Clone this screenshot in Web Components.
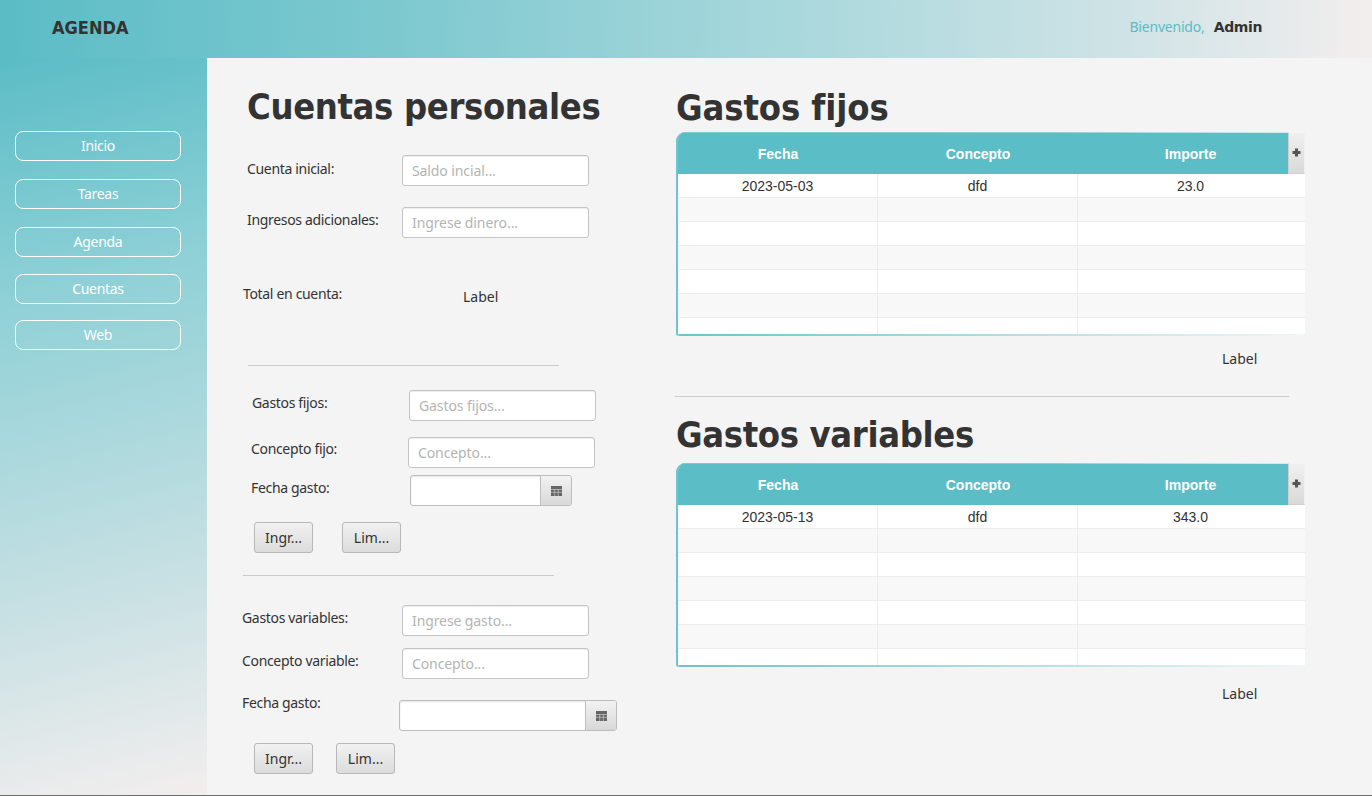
<!DOCTYPE html>
<html lang="es">
<head>
<meta charset="utf-8">
<title>Agenda</title>
<style>
  html, body { margin: 0; height: 100%; }
  body { width: 1372px; height: 796px; overflow: hidden; background: #f4f4f4; font-family: "Noto Sans", sans-serif; color: #333; }
  .left { flex: none; width: 414px; padding-left: 35px; }
  .right { flex: none; padding-left: 20px; }
</style>
</head>
<body>
<agenda-app>
  <top-bar slot="top"></top-bar>
  <side-nav slot="side">
    <nav-button style="margin-top:73px">Inicio</nav-button>
    <nav-button style="margin-top:18px">Tareas</nav-button>
    <nav-button style="margin-top:18px">Agenda</nav-button>
    <nav-button style="margin-top:17px">Cuentas</nav-button>
    <nav-button style="margin-top:16px">Web</nav-button>
  </side-nav>
  <div class="left" slot="main">
    <big-title style="--x:5px;--top:27px">Cuentas personales</big-title>
    <form-row style="--x:5px;--top:26px;--label:155px;--label-shift:-2px"><span slot="label">Cuenta inicial:</span><text-box hint="Saldo incial..."></text-box></form-row>
    <form-row style="--x:5px;--top:21px;--label:155px;--label-shift:-3px"><span slot="label">Ingresos adicionales:</span><text-box hint="Ingrese dinero..."></text-box></form-row>
    <form-row style="--x:1px;--top:47px;--label:220px;--label-shift:-4px;--h:24px"><span slot="label">Total en cuenta:</span><plain-label style="--x:0px;--top:0px">Label</plain-label></form-row>
    <thin-rule style="--x:6px;--top:56px;--w:311px"></thin-rule>
    <form-row style="--x:10px;--top:24px;--label:157px;--label-shift:-3px"><span slot="label">Gastos fijos:</span><text-box hint="Gastos fijos..."></text-box></form-row>
    <form-row style="--x:9px;--top:16px;--label:157px;--label-shift:-4px"><span slot="label">Concepto fijo:</span><text-box hint="Concepto..."></text-box></form-row>
    <form-row style="--x:9px;--top:7px;--label:159px;--label-shift:-3px"><span slot="label">Fecha gasto:</span><date-box style="--w:162px"></date-box></form-row>
    <button-row style="--x:12px;--top:16px;--gap:29px"><push-button>Ingr...</push-button><push-button>Lim...</push-button></button-row>
    <thin-rule style="--x:1px;--top:22px;--w:311px"></thin-rule>
    <form-row style="--x:0px;--top:29px;--label:160px;--label-shift:-3px"><span slot="label">Gastos variables:</span><text-box hint="Ingrese gasto..."></text-box></form-row>
    <form-row style="--x:0px;--top:12px;--label:160px;--label-shift:-3px"><span slot="label">Concepto variable:</span><text-box hint="Concepto..."></text-box></form-row>
    <form-row style="--x:0px;--top:21px;--label:157px;--label-shift:-13px"><span slot="label">Fecha gasto:</span><date-box style="--w:218px"></date-box></form-row>
    <button-row style="--x:12px;--top:12px;--gap:23px"><push-button>Ingr...</push-button><push-button>Lim...</push-button></button-row>
  </div>
  <div class="right" slot="main">
    <big-title style="--top:28px;--track:-.1px">Gastos fijos</big-title>
    <data-table style="--top:2px" fecha="2023-05-03" concepto="dfd" importe="23.0"></data-table>
    <plain-label style="--x:546px;--top:11px">Label</plain-label>
    <thin-rule style="--x:-1px;--top:25px;--w:614px"></thin-rule>
    <big-title style="--top:16px">Gastos variables</big-title>
    <data-table style="--top:6px" fecha="2023-05-13" concepto="dfd" importe="343.0"></data-table>
    <plain-label style="--x:546px;--top:15px">Label</plain-label>
  </div>
</agenda-app>

<script>
function tpl(html) {
  let t = document.createElement("template");
  t.innerHTML = html;
  return t;
}

class Base extends HTMLElement {
  connectedCallback() {
    if (this.shadowRoot) return;
    this.attachShadow({ mode: "open" });
    this.shadowRoot.appendChild(this.constructor.template.content.cloneNode(true));
    if (this.ready) this.ready();
  }
}

class AgendaApp extends Base {
  static template = tpl(`
    <style>
      :host { display: grid; grid-template: 58px 738px / 207px 1165px; width: 1372px; height: 796px; position: relative; }
      .top { grid-column: 1 / 3; }
      .main { display: flex; background: #f4f4f4; }
      .edge { position: absolute; left: 0; right: 0; bottom: 0; height: 1px; background: #6d6d6d; }
    </style>
    <div class="top"><slot name="top"></slot></div>
    <div class="side"><slot name="side"></slot></div>
    <div class="main"><slot name="main"></slot></div>
    <div class="edge"></div>
  `);
}

class TopBar extends Base {
  static template = tpl(`
    <style>
      :host { display: flex; align-items: center; justify-content: space-between; height: 58px; box-sizing: border-box; padding: 0 110px 3px 52px;
        background: linear-gradient(91deg, #5bbcc6 0%, #7cc8cf 28%, #a9d8dc 58%, #cfe3e6 82%, #f3eeee 100%); }
      .brand { font: bold 18px "DejaVu Sans", sans-serif; font-stretch: condensed; color: #333; }
      .who { padding-bottom: 4px; }
      .hi { font-size: 14px; letter-spacing: -.2px; color: #5bbcc6; }
      b { font: bold 14px "DejaVu Sans", sans-serif; letter-spacing: -.4px; color: #333; margin-left: 5px; }
    </style>
    <span class="brand">AGENDA</span>
    <span class="who"><span class="hi">Bienvenido,</span> <b>Admin</b></span>
  `);
}

class SideNav extends Base {
  static template = tpl(`
    <style>
      :host { display: block; height: 738px; box-sizing: border-box; padding-left: 15px;
        background: linear-gradient(166deg, #5bbcc6 0%, #8dd0d6 30%, #c3dfe2 68%, #f3eeee 100%); overflow: hidden; }
    </style>
    <slot></slot>
  `);
}

class NavButton extends Base {
  static template = tpl(`
    <style>
      :host { display: flex; align-items: center; justify-content: center; width: 166px; height: 30px; box-sizing: border-box; padding-bottom: 2px; border: 1px solid #fff; border-radius: 8px; color: #fff; font-size: 14px; letter-spacing: -.3px; }
    </style>
    <slot></slot>
  `);
}

class BigTitle extends Base {
  static template = tpl(`
    <style>
      :host { display: block; margin: var(--top, 0) 0 0 var(--x, 0); height: 44px; font: bold 36px/44px "DejaVu Sans", sans-serif; font-stretch: condensed; letter-spacing: var(--track, -.35px); color: #333; white-space: nowrap; }
    </style>
    <slot></slot>
  `);
}

class FormRow extends Base {
  static template = tpl(`
    <style>
      :host { display: flex; align-items: center; margin: var(--top, 0) 0 0 var(--x, 0); height: var(--h, 31px); font-size: 14px; color: #333; white-space: nowrap; }
      .label { width: var(--label); flex: none; letter-spacing: -.33px; }
      .inner { display: block; transform: translateY(var(--label-shift, 0)); }
    </style>
    <div class="label"><span class="inner"><slot name="label"></slot></span></div>
    <slot></slot>
  `);
}

class TextBox extends Base {
  static template = tpl(`
    <style>
      :host { display: block; }
      input { display: block; width: 187px; height: 31px; box-sizing: border-box; padding: 0 9px; margin: 0; border: 1px solid #c4c4c4; border-radius: 3px; background: #fff; font: 14px "Noto Sans", sans-serif; letter-spacing: -.1px; color: #333; outline: none; box-shadow: inset 0 1px 1px #eee; }
      input::placeholder { color: #b4b4b4; opacity: 1; }
    </style>
    <input type="text">
  `);
  ready() {
    this.shadowRoot.querySelector("input").placeholder = this.getAttribute("hint") || "";
  }
}

class DateBox extends Base {
  static template = tpl(`
    <style>
      :host { display: flex; width: var(--w); height: 31px; box-sizing: border-box; border: 1px solid #bdbdbd; border-radius: 3px; background: #fff; overflow: hidden; box-shadow: inset 0 1px 2px #e4e4e4; }
      .field { flex: 1; }
      .pick { width: 30px; display: flex; align-items: center; justify-content: center; border-left: 1px solid #bdbdbd; background: linear-gradient(#f2f2f2, #d8d8d8); }
    </style>
    <div class="field"></div>
    <div class="pick">
      <svg width="11" height="10" viewBox="0 0 11 10"><path fill="#666" d="M0 0h11v10H0z"/><path stroke="#c8c8c8" stroke-width=".7" d="M0 3.5h11M0 6.3h11M3.7 3v7M7.3 3v7"/></svg>
    </div>
  `);
}

class ButtonRow extends Base {
  static template = tpl(`
    <style>
      :host { display: flex; gap: var(--gap); margin: var(--top, 0) 0 0 var(--x, 0); }
    </style>
    <slot></slot>
  `);
}

class PushButton extends Base {
  static template = tpl(`
    <style>
      :host { display: flex; align-items: center; justify-content: center; width: 59px; height: 31px; box-sizing: border-box; border: 1px solid #b8b8b8; border-radius: 3px; background: linear-gradient(#f1f1f1, #dcdcdc); font-size: 14px; color: #333; }
    </style>
    <slot></slot>
  `);
}

class ThinRule extends Base {
  static template = tpl(`
    <style>
      :host { display: block; width: var(--w); height: 1px; margin: var(--top, 0) 0 0 var(--x, 0); background: #cbcbcb; }
    </style>
  `);
}

class PlainLabel extends Base {
  static template = tpl(`
    <style>
      :host { display: block; margin: var(--top, 0) 0 0 var(--x, 0); font-size: 14px; line-height: 24px; color: #333; }
    </style>
    <slot></slot>
  `);
}

class DataTable extends Base {
  static template = tpl(`
    <style>
      :host { display: block; position: relative; width: 629px; height: 204px; margin-top: var(--top, 0); box-sizing: border-box; overflow: hidden;
        border-left: 2px solid #6cc4cc; border-radius: 9px 0 0 3px; font: 14px "Liberation Sans", sans-serif; color: #333; }
      :host::before { content: ""; position: absolute; left: 0; right: 0; top: 0; height: 1px; background: linear-gradient(90deg, #7cc9d0, #8fd0d6 60%, #dcecee); }
      :host::after { content: ""; position: absolute; left: 0; right: 0; bottom: 0; height: 2px; background: linear-gradient(90deg, #6cc4cc, #c9e6e9 70%, #f0f6f6); }
      .grid { display: grid; grid-template-columns: 200px 200px 227px; }
      .h { height: 42px; padding-top: 2px; box-sizing: border-box; background: #5bbdc6; color: #fff; font-weight: bold; display: flex; align-items: center; justify-content: center; }
      .c { height: 24px; box-sizing: border-box; display: flex; align-items: center; justify-content: center; border-right: 1px solid #ededed; border-bottom: 1px solid #ededed; background: #fff; }
      .c:nth-child(3n) { border-right: 0; padding-right: 2px; }
      .h:nth-child(3) { padding-right: 2px; }
      .c.odd { background: #f8f8f8; }
      .plus { position: absolute; top: 0; right: 0; width: 17px; height: 42px; box-sizing: border-box; padding-bottom: 2px; border: 1px solid #cfcfcf; border-top-color: #f4f4f4; border-right-color: #f0f0f0; background: linear-gradient(#f0f0f0, #d9d9d9); display: flex; align-items: center; justify-content: center; }
    </style>
    <div class="grid"></div>
    <div class="plus"><svg width="9" height="9" viewBox="0 0 9 9"><path fill="#555" d="M3 .5h3V3h2.5v3H6v2.5H3V6H.5V3H3z"/></svg></div>
  `);
  ready() {
    let grid = this.shadowRoot.querySelector(".grid");
    let html = "";
    for (let name of ["Fecha", "Concepto", "Importe"]) {
      html += `<div class="h">${name}</div>`;
    }
    let first = [this.getAttribute("fecha"), this.getAttribute("concepto"), this.getAttribute("importe")];
    for (let r = 0; r < 7; r++) {
      for (let c = 0; c < 3; c++) {
        html += `<div class="c ${r % 2 ? "odd" : ""}">${r === 0 ? first[c] : ""}</div>`;
      }
    }
    grid.innerHTML = html;
  }
}

customElements.define("agenda-app", AgendaApp);
customElements.define("top-bar", TopBar);
customElements.define("side-nav", SideNav);
customElements.define("nav-button", NavButton);
customElements.define("big-title", BigTitle);
customElements.define("form-row", FormRow);
customElements.define("text-box", TextBox);
customElements.define("date-box", DateBox);
customElements.define("button-row", ButtonRow);
customElements.define("push-button", PushButton);
customElements.define("thin-rule", ThinRule);
customElements.define("plain-label", PlainLabel);
customElements.define("data-table", DataTable);
</script>
</body>
</html>
